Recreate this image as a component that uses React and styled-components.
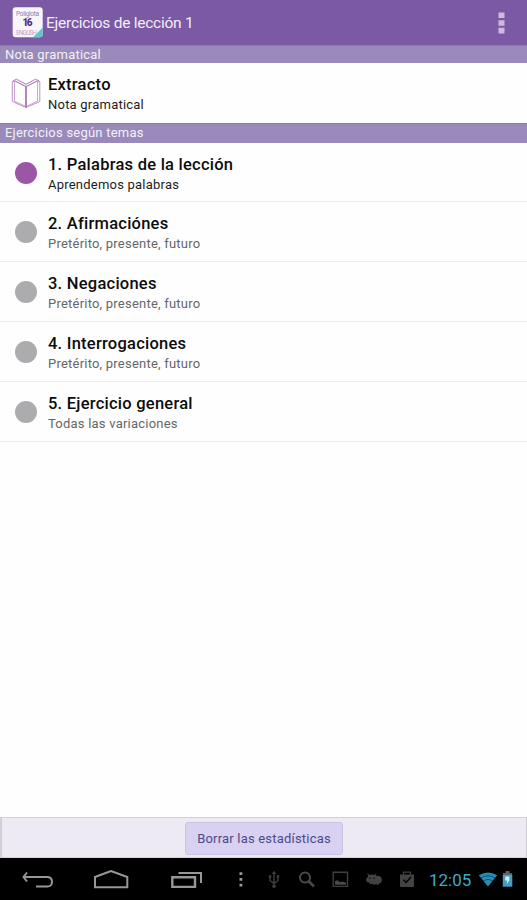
import React from 'react';
import styled, { createGlobalStyle } from 'styled-components';

const GlobalStyle = createGlobalStyle`
  * {
    box-sizing: border-box;
  }
  body {
    margin: 0;
    background: #fff;
    font-family: Roboto, sans-serif;
  }
`

const Screen = styled.div`
  display: flex;
  flex-direction: column;
  height: 900px;
  overflow: hidden;
  background: #fefefe;
`

const ActionBar = styled.header`
  display: flex;
  align-items: center;
  flex: none;
  height: 45px;
  padding: 0 22px 0 12px;
  background: #7b59a5;
`

const Title = styled.h1`
  flex: 1;
  margin: 0 0 0 3px;
  font-size: 15.5px;
  line-height: 20px;
  font-weight: 400;
  letter-spacing: -0.24px;
  color: #f3eef8;
`

const SectionHeader = styled.div`
  flex: none;
  height: ${props => props.$height}px;
  padding-left: 5px;
  font-size: 13px;
  line-height: 18px;
  letter-spacing: 0.22px;
  color: #f3f0f8;
  background: #9a8abb;
  border-top: 1px solid #8d78b1;
`

const Row = styled.div`
  display: flex;
  flex: none;
  height: ${props => props.$height}px;
  padding: 11px 0 0 11px;
  border-bottom: ${props => props.$last ? 'none' : '1px solid #ededed'};
`

const RowIcon = styled.div`
  display: flex;
  justify-content: center;
  width: 30px;
  margin: ${props => props.$top}px 7px 0 0;
`

const Dot = styled.div`
  width: 22px;
  height: 22px;
  border-radius: 50%;
  background: ${props => props.$active ? '#9b57a5' : '#acabad'};
`

const RowTitle = styled.div`
  font-size: 16.5px;
  line-height: 21px;
  font-weight: 500;
  letter-spacing: 0.24px;
  color: #0c0c0c;
`

const RowText = styled.div`
  font-size: 13px;
  line-height: 20px;
  letter-spacing: 0.22px;
  color: ${props => props.$dark ? '#1c1c1c' : '#666'};
`

const Spacer = styled.div`
  flex: 1;
`

const Footer = styled.footer`
  display: flex;
  flex: none;
  justify-content: center;
  height: 41px;
  padding-top: 4px;
  background: #eeeaf3;
  border: 1px solid #d2cfd5;
  border-width: 1px 1px 1px 2px;
`

const ClearButton = styled.button`
  width: 158px;
  height: 33px;
  padding: 0;
  font-family: inherit;
  font-size: 13px;
  letter-spacing: 0.2px;
  color: #4b4a8c;
  background: #d9d1f1;
  border: 1px solid #cbc4e0;
  border-radius: 3px;
`

const NavBar = styled.nav`
  display: flex;
  align-items: center;
  flex: none;
  height: 42px;
  padding-top: 1px;
  background: #000;
`

const NavIcon = styled.svg`
  flex: none;
  margin-left: ${props => props.$gap}px;
  fill: none;
  stroke: ${props => props.$color || '#3f3f3f'};
  stroke-width: 2;
`

const Clock = styled.div`
  width: 45px;
  margin-left: 14px;
  font-size: 17px;
  line-height: 20px;
  white-space: nowrap;
  color: #3fa9d2;
`

const exercises = [
  { title: '1. Palabras de la lección', text: 'Aprendemos palabras', active: true },
  { title: '2. Afirmaciónes', text: 'Pretérito, presente, futuro' },
  { title: '3. Negaciones', text: 'Pretérito, presente, futuro' },
  { title: '4. Interrogaciones', text: 'Pretérito, presente, futuro' },
  { title: '5. Ejercicio general', text: 'Todas las variaciones' }
]

function AppLogo() {
  return (
    <svg width="31" height="31" viewBox="0 0 31 31" fontFamily="Roboto" textAnchor="middle">
      <rect x="0.7" y="0.3" width="30" height="30" rx="3" fill="#f8f5fb" />
      <text x="15.5" y="9.3" fontSize="6.5" textLength="23" fill="#8f80ae">Poliglota</text>
      <text x="15.5" y="19.4" fontSize="10" fontWeight="900" textLength="10" fill="#573582">16</text>
      <text x="14.5" y="27.6" fontSize="6.5" textLength="21" fill="#c6a3ca">ENGLISH</text>
      <path d="M30.7 20.5v7q0 2.8-2.8 2.8H21z" fill="#61c5c9" />
    </svg>
  )
}

function BookIcon() {
  return (
    <svg width="30" height="32" viewBox="0 0 30 32" fill="none" stroke="#bd8fc6" strokeWidth="1">
      <path d="M3.5 4.5H1.3v20L15 30.5l13.8-6v-20h-2.3" />
      <path d="M3.5 24.2V3.8L15 9.5l11.5-5.7v20.4L15 29.5z" stroke="#cba6d1" />
      <path d="M15 9.5v21" stroke="#a86cb4" strokeWidth="1.7" />
      <path d="M1.8 4 5.5 2.2 15 7.3l9.5-5.1L28.2 4M4 4l11 5.7L26 4" stroke="#b47cbe" />
    </svg>
  )
}

function SystemBar() {
  return (
    <NavBar>
      <NavIcon $gap={21} width="34" height="20" $color="#979797">
        <path d="M6 2.5 2.5 7 6 11.5M3 7h23q5 0 5 4.8T26 16.5H15" />
      </NavIcon>
      <NavIcon $gap={38} width="37" height="20" $color="#979797">
        <path d="M2 17.2V7L18 1l16.3 6v10.2z" />
      </NavIcon>
      <NavIcon $gap={40} width="34" height="20" $color="#979797">
        <path d="M2.3 7.2h22.7v9.7H2.3z" strokeWidth="2.4" />
        <path d="M8.5 3h22.5v10" />
      </NavIcon>
      <NavIcon $gap={35} width="4" height="18">
        <path d="M.5 1.3h2.8v2.8H.5zM.5 7h2.8v2.8H.5zM.5 12.7h2.8v2.8H.5z" fill="#999" stroke="none" />
      </NavIcon>
      <NavIcon $gap={25} width="12" height="20">
        <path d="M6 2v15M2 6.5v4L6 13.5l4-3v-4" strokeWidth="1.4" />
        <path d="M6 .8 8.2 4H3.8zM.8 5.2h2.5v2.6H.8zM8.7 5.2h2.5v2.6H8.7z" fill="#3f3f3f" stroke="none" />
        <circle cx="6" cy="16.2" r="1.8" fill="#3f3f3f" stroke="none" />
      </NavIcon>
      <NavIcon $gap={18} width="18" height="20" $color="#4a4a4a">
        <circle cx="7" cy="7.5" r="5" />
        <path d="m10.5 11 5.5 5.5" strokeWidth="2.5" />
      </NavIcon>
      <NavIcon $gap={16} width="17" height="20">
        <path d="M1.2 2.2h14.3v14.2H1.2z" strokeWidth="1.4" />
        <path d="M3 14.8v-3.6l2.5-1 2.5 2 2.5-.7 3.5 1.3v2z" fill="#4a4a4a" stroke="none" />
      </NavIcon>
      <NavIcon $gap={16} width="18" height="20">
        <path d="M2.5 2.8 4.3 5q2.7-1.2 5.2 0l1.8-2-.5 2.8q5.7-.6 6 3.6.3 3.6-2.8 4.1l-1 1.8-2-1.2-2 .8-1.5-1.1-2.3.5-1-1.8Q.6 12.3 1 9.3l2-2.8z" fill="#434343" stroke="none" />
        <path d="M4.2 8.2h1.3M8.2 8.2h1.3" stroke="#000" strokeWidth="1" />
      </NavIcon>
      <NavIcon $gap={16} width="16" height="20">
        <path d="M1 4.5h14V16q0 1-1 1H2q-1 0-1-1z" fill="#434343" stroke="none" />
        <path d="M4.5 5V2.2h7V5" strokeWidth="1.3" />
        <path d="m4.5 9.7 2.5 2.8 5-5.5" stroke="#000" strokeWidth="1.5" />
      </NavIcon>
      <Clock>12:05</Clock>
      <NavIcon $gap={4} width="20" height="20">
        <path d="M.8 5.3Q10-.3 19.2 5.3L10 16.5z" fill="#2b8db5" stroke="none" />
        <path d="M3 8q7-4.5 14 0M5.3 10.8q4.7-3 9.4 0" stroke="#0b4058" strokeWidth="0.8" />
      </NavIcon>
      <NavIcon $gap={4} width="11" height="20">
        <path d="M3.5 1h4v2H10v2.5H1V3h2.5z" fill="#5c6468" stroke="none" />
        <path d="M.8 5h9.5v11.7H.8z" fill="#42a0c8" stroke="none" />
        <path d="M3.3 6.5h4v4L4.8 14l.4-3.5H3.3z" fill="#d4eef8" stroke="none" />
      </NavIcon>
    </NavBar>
  )
}

export default function App() {
  return (
    <Screen>
      <GlobalStyle />
      <ActionBar>
        <AppLogo />
        <Title>Ejercicios de lección 1</Title>
        <svg width="7" height="22" fill="#cfb9df">
          <path d="M.5.5h6v5.6h-6zM.5 8.2h6v5.6h-6zM.5 15.7h6v5.8h-6z" />
        </svg>
      </ActionBar>
      <SectionHeader $height={18.2}>Nota gramatical</SectionHeader>
      <Row $height={60.1} $last>
        <RowIcon $top={3}><BookIcon /></RowIcon>
        <div>
          <RowTitle>Extracto</RowTitle>
          <RowText $dark>Nota gramatical</RowText>
        </div>
      </Row>
      <SectionHeader $height={19.3}>Ejercicios según temas</SectionHeader>
      {
        exercises.map(item => (
          <Row key={item.title} $height={59.8}>
            <RowIcon $top={8}><Dot $active={item.active} /></RowIcon>
            <div>
              <RowTitle>{item.title}</RowTitle>
              <RowText $dark={item.active}>{item.text}</RowText>
            </div>
          </Row>
        ))
      }
      <Spacer />
      <Footer>
        <ClearButton>Borrar las estadísticas</ClearButton>
      </Footer>
      <SystemBar />
    </Screen>
  )
}
